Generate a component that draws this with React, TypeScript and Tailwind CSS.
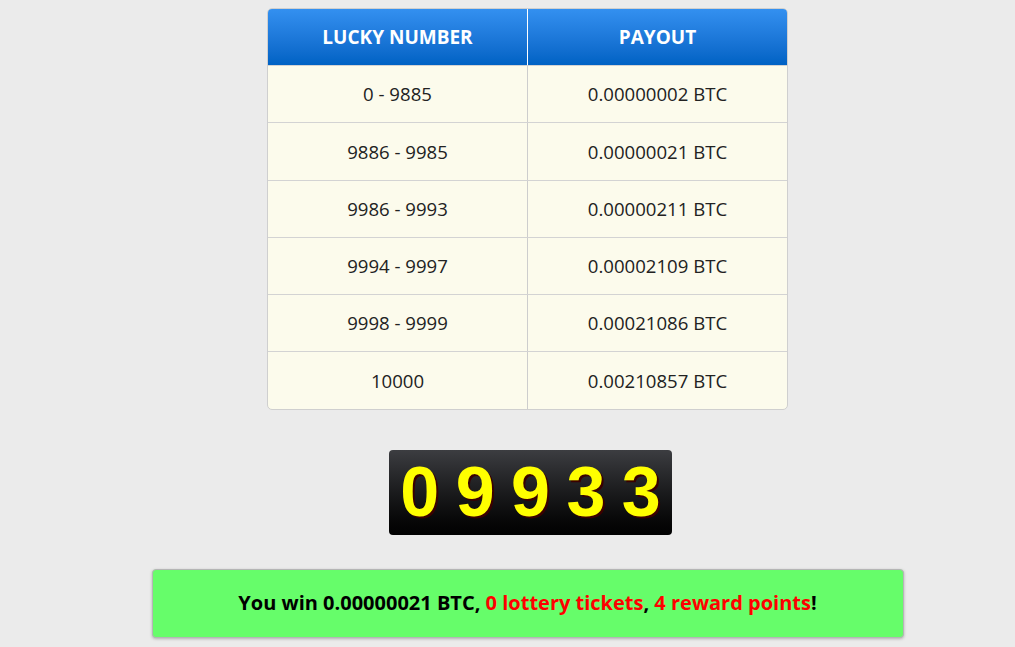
import React from "react";

const rows = [
  ["0 - 9885", "0.00000002 BTC"],
  ["9886 - 9985", "0.00000021 BTC"],
  ["9986 - 9993", "0.00000211 BTC"],
  ["9994 - 9997", "0.00002109 BTC"],
  ["9998 - 9999", "0.00021086 BTC"],
  ["10000", "0.00210857 BTC"],
];

const digits = ["0", "9", "9", "3", "3"];

export default function App() {
  return (
    <div
      className="w-[1015px] h-[647px] overflow-hidden bg-[#ebebeb] pl-[40px] flex flex-col items-center"
      style={{ fontFamily: '"Open Sans", sans-serif' }}
    >
      <div className="mt-[8px] w-[521px] border border-[#cfcfcf] rounded-[5px] overflow-hidden bg-[#fcfbec]">
        <div className="flex h-[56px] bg-gradient-to-b from-[#3390f0] to-[#0062c4] text-white font-bold text-[19px]">
          <div className="w-[260px] flex items-center justify-center border-r border-white">LUCKY NUMBER</div>
          <div className="flex-1 flex items-center justify-center">PAYOUT</div>
        </div>
        {rows.map(([a, b]) => (
          <div key={a} className="flex h-[57.3px] border-t border-[#d3d3d3] text-[18.6px] text-[#222]">
            <div className="w-[260px] flex items-center justify-center border-r border-[#cdcdcd]">{a}</div>
            <div className="flex-1 flex items-center justify-center">{b}</div>
          </div>
        ))}
      </div>

      <div className="mt-[40px] ml-[6px] flex w-[283px] h-[85px] px-[3px] rounded-[4px] overflow-hidden bg-gradient-to-b from-[#3c3d41] to-[#020202]">
        {digits.map((d, i) => (
          <div
            key={i}
            className="flex-1 flex items-center justify-center text-[#ffff00] font-bold text-[70px] leading-none"
            style={{
              fontFamily: '"Liberation Sans", Arial, sans-serif',
              textShadow: "2px 2px 0 #3a0000",
            }}
          >
            {d}
          </div>
        ))}
      </div>

      <div className="mt-[34px] w-[752px] h-[69px] bg-[#66fd6a] border border-[#b5b5b5] rounded-[4px] shadow-[0_1px_3px_rgba(0,0,0,0.25)] flex items-center justify-center text-[20px] font-bold text-black">
        <span>
          You win 0.00000021 BTC, <span className="text-[#ff0000]">0 lottery tickets</span>,{" "}
          <span className="text-[#ff0000]">4 reward points</span>!
        </span>
      </div>
    </div>
  );
}
